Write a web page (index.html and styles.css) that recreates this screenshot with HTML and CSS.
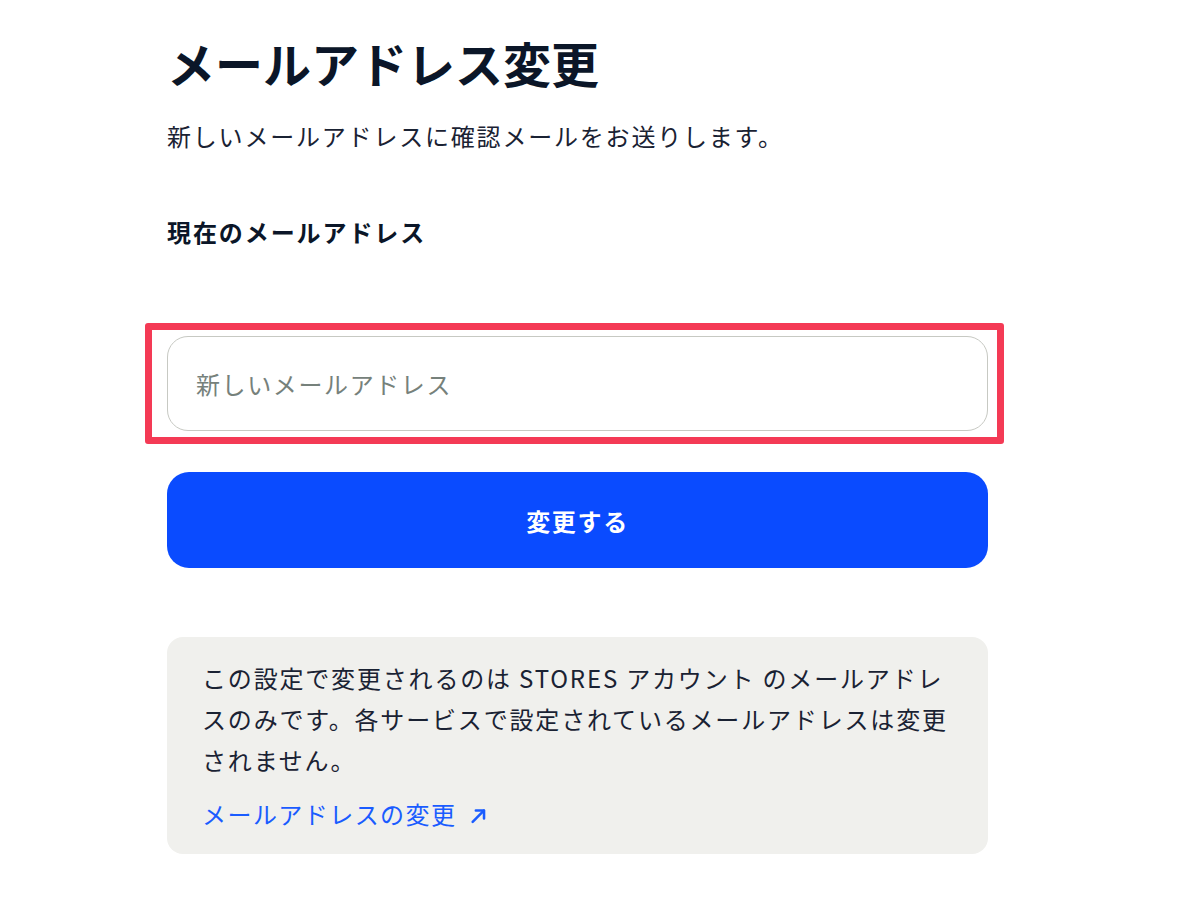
FILE: index.html
```html
<!DOCTYPE html>
<html lang="ja">
<head>
<meta charset="utf-8">
<title>メールアドレス変更</title>
<link rel="stylesheet" href="styles.css">
</head>
<body>
<main class="page">
  <h1 class="title">メールアドレス変更</h1>
  <p class="lead">新しいメールアドレスに確認メールをお送りします。</p>
  <h2 class="label">現在のメールアドレス</h2>
  <div class="current"></div>
  <div class="field">
    <input class="input" type="email" placeholder="新しいメールアドレス">
    <span class="highlight" aria-hidden="true"></span>
  </div>
  <button class="submit" type="button">変更する</button>
  <section class="note">
    <p class="note-text">この設定で変更されるのは STORES アカウント のメールアドレスのみです。各サービスで設定されているメールアドレスは変更されません。</p>
    <a class="note-link" href="#">メールアドレスの変更<svg class="ext" viewBox="0 0 16 16" width="17" height="17" aria-hidden="true"><path d="M2.5 14 L13 3.5" stroke="currentColor" stroke-width="2.4" fill="none" stroke-linecap="round"/><path d="M5.5 3.2 H13.2 V10.8" stroke="currentColor" stroke-width="2.4" fill="none" stroke-linecap="round" stroke-linejoin="round"/></svg></a>
  </section>
</main>
</body>
</html>
```

FILE: styles.css
```css
html, body {
  margin: 0;
  padding: 0;
  background: #ffffff;
}

body {
  font-family: "Noto Sans CJK JP", "Noto Sans", sans-serif;
  color: #141d2e;
}

.page {
  width: 821px;
  margin-left: 167px;
  padding-top: 29px;
  display: flex;
  flex-direction: column;
}

.title {
  margin: 0;
  font-size: 48px;
  line-height: 67px;
  font-weight: 700;
  color: #0b1628;
}

.lead {
  margin: 22px 0 0;
  font-size: 24px;
  line-height: 36px;
  letter-spacing: 0.075em;
  color: #1a2233;
}

.label {
  margin: 60px 0 0;
  font-size: 24px;
  line-height: 36px;
  font-weight: 700;
  letter-spacing: 0.08em;
  color: #0b1628;
}

.current {
  height: 86px;
}

.field {
  position: relative;
  height: 95px;
}

.input {
  box-sizing: border-box;
  width: 100%;
  height: 95px;
  border: 1.5px solid #c7c9c3;
  border-radius: 21px;
  padding: 0 28px;
  font-family: "Noto Sans CJK JP", "Noto Sans", sans-serif;
  font-size: 24px;
  letter-spacing: 0.067em;
  color: #1a2233;
  background: #ffffff;
  outline: none;
}

.input::placeholder {
  color: #76817b;
}

.highlight {
  position: absolute;
  top: -13px;
  left: -22px;
  right: -16px;
  bottom: -13px;
  border: 7px solid #f43a55;
  border-radius: 3px;
  pointer-events: none;
}

.submit {
  margin-top: 41px;
  height: 96px;
  width: 100%;
  border: none;
  border-radius: 22px;
  background: #0a4bff;
  color: #ffffff;
  font-family: "Noto Sans CJK JP", "Noto Sans", sans-serif;
  font-size: 24px;
  font-weight: 700;
  letter-spacing: 0.07em;
  cursor: pointer;
}

.note {
  margin-top: 69px;
  background: #f0f0ed;
  border-radius: 16px;
  padding: 20px 30px 20px 35px;
}

.note-text {
  margin: 0;
  font-size: 24px;
  line-height: 41px;
  letter-spacing: 0.076em;
  color: #1a2233;
}

.note-link {
  display: inline-flex;
  align-items: center;
  gap: 14px;
  margin-top: 13px;
  font-size: 24px;
  line-height: 41px;
  letter-spacing: 0.06em;
  color: #1a5cff;
  text-decoration: none;
}

.ext {
  color: #1a5cff;
  margin-top: 3px;
}
```
